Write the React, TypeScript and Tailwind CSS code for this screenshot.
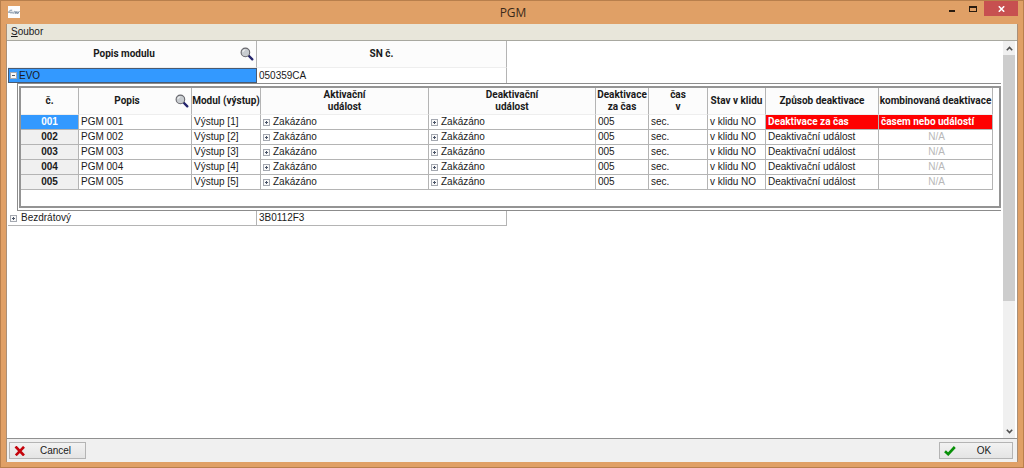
import { useState } from "react";
import type { ReactNode } from "react";
import { clsx } from "clsx";

type Output = {
  id: string;
  name: string;
  output: string;
  mode: string;
  combined: string;
  alert?: boolean;
};

const OUTPUTS: Output[] = [
  { id: "001", name: "PGM 001", output: "Výstup [1]", mode: "Deaktivace za čas", combined: "časem nebo událostí", alert: true },
  { id: "002", name: "PGM 002", output: "Výstup [2]", mode: "Deaktivační událost", combined: "N/A" },
  { id: "003", name: "PGM 003", output: "Výstup [3]", mode: "Deaktivační událost", combined: "N/A" },
  { id: "004", name: "PGM 004", output: "Výstup [4]", mode: "Deaktivační událost", combined: "N/A" },
  { id: "005", name: "PGM 005", output: "Výstup [5]", mode: "Deaktivační událost", combined: "N/A" },
];

const COLUMNS: { label: ReactNode; width: string; search?: boolean }[] = [
  { label: "č.", width: "w-[58px]" },
  { label: "Popis", width: "w-[113px]", search: true },
  { label: "Modul (výstup)", width: "w-[69px]" },
  { label: <>Aktivační<br />událost</>, width: "w-[168px]" },
  { label: <>Deaktivační<br />událost</>, width: "w-[167px]" },
  { label: <>Deaktivace<br />za čas</>, width: "w-[53px]" },
  { label: <>čas<br />v</>, width: "w-[59px]" },
  { label: "Stav v klidu", width: "w-[58px]" },
  { label: "Způsob deaktivace", width: "w-[113px]" },
  { label: "kombinovaná deaktivace", width: "w-[114px]" },
];

const CELL = "h-[15px] border-r border-b border-[#b4b4b4] p-0 pl-0.5";
const HEAD = "h-[27px] border-r border-b border-r-[#b4b4b4] border-b-[#eeeeee] bg-[#fcfcfc] p-0 font-[Roboto,sans-serif] font-bold leading-3 whitespace-nowrap";
const ALERT = "bg-[#ff0000] font-[Roboto,sans-serif] font-bold text-white";

function SearchButton({ label }: { label: string }) {
  return (
    <button type="button" aria-label={label} className="shrink-0">
      <svg width="14" height="14" viewBox="0 0 14 14" fill="none">
        <path d="M8.5 8.5 12.3 12.3" stroke="#24246c" strokeWidth="2.4" strokeLinecap="round" />
        <circle cx="5.4" cy="5.4" r="4.3" fill="#c8ccd0" stroke="#66666c" strokeWidth="1.1" />
        <path d="M2.8 5.2a2.6 2.6 0 0 1 2.4-2.4" stroke="#f8f8f8" />
      </svg>
    </button>
  );
}

function Toggle({ open, label, onClick }: { open: boolean; label: string; onClick?: () => void }) {
  return (
    <button type="button" aria-label={label} aria-expanded={open} onClick={onClick} className="shrink-0">
      <svg width="7" height="7" viewBox="0 0 7 7" className="block" shapeRendering="crispEdges">
        <rect width="7" height="7" fill="#a4a8b0" />
        <rect x="1" y="1" width="5" height="5" fill="#f8f8f8" />
        <path d={open ? "M2 3h3v1H2z" : "M2 3h3v1H2zM3 2h1v3H3z"} fill="#4a5468" />
      </svg>
    </button>
  );
}

function EventCell({ label }: { label: string }) {
  return (
    <td className={CELL}>
      <div className="flex items-center gap-[3px]">
        <Toggle open={false} label={label} />
        <span>Zakázáno</span>
      </div>
    </td>
  );
}

function OutputsTable() {
  return (
    <table className="w-[972px] table-fixed border-separate border-spacing-0">
      <thead>
        <tr>
          {COLUMNS.map((col, i) => (
            <th key={i} scope="col" className={clsx(HEAD, col.width)}>
              {col.search ? (
                <div className="flex items-center pr-0.5">
                  <span className="flex-1">{col.label}</span>
                  <SearchButton label="Hledat popis" />
                </div>
              ) : (
                col.label
              )}
            </th>
          ))}
        </tr>
      </thead>
      <tbody>
        {OUTPUTS.map((o, i) => (
          <tr key={o.id}>
            <th
              scope="row"
              className={clsx("h-[15px] border-r border-b border-[#b4b4b4] p-0 font-bold", i === 0 ? "bg-[#3399ff] text-white" : "bg-[#f0f0f0]")}
            >
              {o.id}
            </th>
            <td className={CELL}>{o.name}</td>
            <td className={CELL}>{o.output}</td>
            <EventCell label={`Aktivační událost ${o.id}`} />
            <EventCell label={`Deaktivační událost ${o.id}`} />
            <td className={CELL}>005</td>
            <td className={CELL}>sec.</td>
            <td className={CELL}>v klidu NO</td>
            <td className={clsx(CELL, o.alert && ALERT)}>{o.mode}</td>
            <td className={clsx(CELL, o.alert ? ALERT : "text-center text-[#b8b8b8]")}>{o.combined}</td>
          </tr>
        ))}
      </tbody>
    </table>
  );
}

function ModulesTable() {
  const [open, setOpen] = useState(true);

  return (
    <table className="w-full table-fixed border-separate border-spacing-0">
      <thead>
        <tr>
          <th scope="col" className={clsx(HEAD, "w-[249px]")}>
            <div className="flex items-center pr-0.5">
              <span className="flex-1">Popis modulu</span>
              <SearchButton label="Hledat modul" />
            </div>
          </th>
          <th scope="col" className={clsx(HEAD, "w-[250px]")}>
            SN č.
          </th>
          <td className="p-0" />
        </tr>
      </thead>
      <tbody>
        <tr className="leading-[13px]">
          <td className="h-[15px] border border-[#4a5a70] bg-[#3399ff] p-0 pl-px">
            <div className="flex items-center gap-0.5">
              <Toggle open={open} label="EVO" onClick={() => setOpen(!open)} />
              <span>EVO</span>
            </div>
          </td>
          <td className="border-r border-[#b4b4b4] p-0 pl-0.5">050359CA</td>
          <td className="p-0" />
        </tr>
        {open && (
          <tr>
            <td colSpan={3} className="p-0 pl-[9px]">
              <div className="border-y border-l border-[#8c8c8c] py-0.5 pl-px">
                <div className="overflow-hidden border-2 border-[#949494] pb-4">
                  <OutputsTable />
                </div>
              </div>
            </td>
          </tr>
        )}
        <tr>
          <td className={CELL}>
            <div className="flex items-center gap-1">
              <Toggle open={false} label="Bezdrátový" />
              <span>Bezdrátový</span>
            </div>
          </td>
          <td className={CELL}>3B0112F3</td>
          <td className="p-0" />
        </tr>
      </tbody>
    </table>
  );
}

function Scrollbar() {
  return (
    <div className="flex w-3 shrink-0 flex-col bg-[#f0f0f0]">
      <button type="button" aria-label="Nahoru" className="flex h-[14px] items-center justify-center">
        <svg width="7" height="5" viewBox="0 0 7 5" fill="none">
          <path d="M.8 4.2 3.5 1.5 6.2 4.2" stroke="#505050" strokeWidth="1.6" />
        </svg>
      </button>
      <div className="flex-1">
        <div className="h-2/3 bg-[#cdcdcd]" />
      </div>
      <button type="button" aria-label="Dolů" className="flex h-[14px] items-center justify-center">
        <svg width="7" height="5" viewBox="0 0 7 5" fill="none">
          <path d="M.8.8 3.5 3.5 6.2.8" stroke="#505050" strokeWidth="1.6" />
        </svg>
      </button>
    </div>
  );
}

function TitleBar() {
  return (
    <header className="flex h-[23px] shrink-0 items-start">
      <div className="flex flex-1 pt-[5px] pl-0.5">
        <svg width="12" height="12" viewBox="0 0 12 12" fill="none">
          <rect width="12" height="12" fill="#fdfdfd" />
          <path
            d="M.6 6.8C.8 4.8 2 4 4.2 4.2M1 6.2h2.2M3 7.6C3.2 5.4 5 5.2 4.9 7.6M6.6 5.3c-1.6.6.2 1.2-.7 2.4M7.2 5.2l.7 2.6 1-2.4.8 2.4L11.4 5"
            stroke="#71859a"
            strokeWidth=".9"
          />
        </svg>
      </div>
      <h1 className="pt-1 font-['Open_Sans',sans-serif] text-xs leading-4 text-[#3a2a1a]">PGM</h1>
      <div className="flex flex-1 justify-end">
        <button type="button" aria-label="Minimalizovat" className="flex h-[15px] w-5 items-center justify-center">
          <svg width="6" height="6" viewBox="0 0 6 6">
            <path d="M0 4h6v2H0z" fill="#2a1c10" />
          </svg>
        </button>
        <button type="button" aria-label="Maximalizovat" className="flex h-[15px] w-[22px] items-center justify-center">
          <svg width="8" height="6" viewBox="0 0 8 6" shapeRendering="crispEdges">
            <path d="M0 0h8v6H0zM1 2v3h6V2z" fillRule="evenodd" fill="#2a1c10" />
          </svg>
        </button>
        <button type="button" aria-label="Zavřít" className="flex h-[15px] w-[34px] items-center justify-center bg-[#c75050]">
          <svg width="7" height="6" viewBox="0 0 7 6">
            <path d="M.8.3 6.2 5.7M6.2.3.8 5.7" stroke="#ffffff" strokeWidth="1.6" />
          </svg>
        </button>
      </div>
    </header>
  );
}

export default function App() {
  return (
    <div className="flex h-screen flex-col border border-[#b87f4c] bg-[#e0a066] px-[5px] pb-[5px] font-['Liberation_Sans',Arial,sans-serif] text-[10px] leading-[14px] text-[#1a1a1a]">
      <TitleBar />
      <div className="flex min-h-0 flex-1 flex-col border-x border-[#a98f78] bg-white">
        <nav className="flex h-[17px] shrink-0 items-center border-b border-[#a8a8a0] bg-[#e8e6da] px-1">
          <button type="button">
            <u>S</u>oubor
          </button>
        </nav>
        <main className="flex min-h-0 flex-1 pr-0.5 pl-px">
          <div className="min-w-0 flex-1 overflow-hidden pr-0.5">
            <ModulesTable />
          </div>
          <Scrollbar />
        </main>
        <footer className="flex h-6 shrink-0 items-center justify-between border-t border-[#909090] bg-[#f0f0f0] pr-1 pl-0.5">
          <button type="button" className="flex h-[17px] w-[77px] items-center border border-[#b4b4b4] bg-gradient-to-b from-[#f2f2f2] to-[#e4e4e4] pl-1">
            <svg width="12" height="10" viewBox="0 0 12 10" fill="none">
              <path d="M1.5.5 10 9.5M10 .8 1.8 9.3" stroke="#c4040c" strokeWidth="2.6" />
            </svg>
            <span className="flex-1">Cancel</span>
          </button>
          <button type="button" className="flex h-[17px] w-[74px] items-center border border-[#b4b4b4] bg-gradient-to-b from-[#f2f2f2] to-[#e4e4e4] pl-1">
            <svg width="12" height="10" viewBox="0 0 12 10" fill="none">
              <path d="M1 5.2 4.2 8.2 10.8 1" stroke="#089008" strokeWidth="2.6" />
            </svg>
            <span className="flex-1">OK</span>
          </button>
        </footer>
      </div>
    </div>
  );
}
